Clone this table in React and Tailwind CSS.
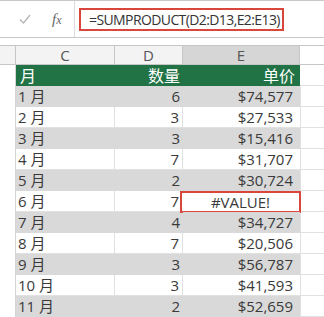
const rows = [
  ["1 月", "6", "$74,577"],
  ["2 月", "3", "$27,533"],
  ["3 月", "3", "$15,416"],
  ["4 月", "7", "$31,707"],
  ["5 月", "2", "$30,724"],
  ["6 月", "7", "#VALUE!"],
  ["7 月", "4", "$34,727"],
  ["8 月", "7", "$20,506"],
  ["9 月", "3", "$56,787"],
  ["10 月", "3", "$41,593"],
  ["11 月", "2", "$52,659"],
];

const font = { fontFamily: '"Open Sans", "Noto Sans CJK SC", sans-serif' };

function Row({ month, qty, price, striped }) {
  const isError = price === "#VALUE!";
  const bg = striped ? "bg-[#d9d9d9]" : "bg-white";
  return (
    <div className="flex h-[21px] shrink-0">
      <div className="w-[16px] border-r border-[#d4d4d4] bg-white" />
      <div className={`w-[99px] ${bg} ${striped ? "" : "border-r border-b border-[#e1e1e1]"} flex items-center pl-[2px] text-[15px] text-[#3a3a3a]`}>
        {month}
      </div>
      <div className={`w-[68px] ${bg} ${striped ? "" : "border-r border-b border-[#e1e1e1]"} flex items-center justify-end pr-[3px] text-[15px] text-[#3a3a3a]`}>
        {qty}
      </div>
      <div className={`relative w-[117px] ${bg} ${striped ? "" : "border-b border-[#e1e1e1]"} flex items-center justify-end pr-[7px] text-[15px] text-[#3a3a3a]`}>
        {isError ? (
          <div className="absolute left-[-3px] top-0 w-[121px] h-[22px] border-2 border-[#d9473c] bg-white flex items-center justify-center text-[15px] text-[#3a3a3a]">
            #VALUE!
          </div>
        ) : (
          price
        )}
      </div>
      <div className="flex-1 border-l border-b border-[#e1e1e1] bg-white" />
    </div>
  );
}

export default function App() {
  return (
    <div className="w-[324px] h-[317px] overflow-hidden bg-white flex flex-col" style={font}>
      {/* formula bar */}
      <div className="h-[38px] shrink-0 border-t border-b border-[#c8c8c8] flex items-center">
        <div className="w-[75px] h-full flex items-center border-r border-[#dadada]">
          <svg width="12" height="10" viewBox="0 0 12 10" className="ml-[19px]">
            <path d="M1 5.5 L4.5 9 L11 1" fill="none" stroke="#b5b5b5" strokeWidth="1.3" />
          </svg>
          <span className="ml-[21px] text-[15px] italic text-[#666]" style={{ fontFamily: '"Liberation Serif", serif' }}>
            f<span className="text-[12px]">x</span>
          </span>
        </div>
        <div className="ml-[4px] w-[205px] h-[23px] border-2 border-[#d9473c] flex items-center pl-[8px] text-[14px] tracking-[-0.6px] text-[#333] whitespace-nowrap">
          =SUMPRODUCT(D2:D13,E2:E13)
        </div>
      </div>
      <div className="h-[7px] shrink-0" />
      {/* column headers */}
      <div className="flex h-[20px] shrink-0 border-t border-b border-[#c6c6c6] bg-[#f3f3f3] text-[15px] text-[#555]">
        <div className="w-[16px] border-r border-[#c6c6c6]" />
        <div className="w-[99px] border-r border-[#c6c6c6] flex items-center justify-center">C</div>
        <div className="w-[68px] border-r border-[#c6c6c6] flex items-center justify-center">D</div>
        <div className="w-[117px] bg-[#d6d6d6] border-r border-[#c6c6c6] flex items-center justify-center">E</div>
        <div className="flex-1 bg-white" />
      </div>
      {/* green header */}
      <div className="flex h-[21px] shrink-0">
        <div className="w-[16px] border-r border-[#d4d4d4] bg-white" />
        <div className="w-[284px] bg-[#217346] flex text-white text-[16px]">
          <div className="w-[99px] flex items-center pl-[4px]">月</div>
          <div className="w-[68px] flex items-center justify-end pr-[3px]">数量</div>
          <div className="w-[117px] flex items-center justify-end pr-[5px]">单价</div>
        </div>
        <div className="flex-1 border-b border-[#e1e1e1] bg-white" />
      </div>
      {rows.map((r, i) => (
        <Row key={i} month={r[0]} qty={r[1]} price={r[2]} striped={i % 2 === 0} />
      ))}
    </div>
  );
}
